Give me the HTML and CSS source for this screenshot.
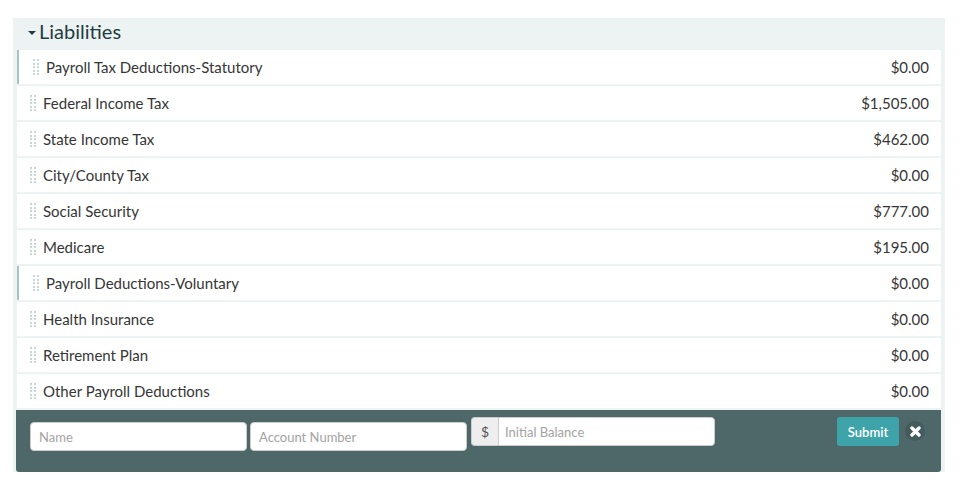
FILE: index.html
```html
<!DOCTYPE html>
<html>
<head>
<meta charset="utf-8">
<link rel="stylesheet" href="styles.css">
</head>
<body>
<div class="panel">
  <div class="panel-head"><span class="caret"></span><span class="title">Liabilities</span></div>
  <div class="rows">
    <div class="row group"><span class="grip"></span><span class="name">Payroll Tax Deductions-Statutory</span><span class="amt">$0.00</span></div>
    <div class="row"><span class="grip"></span><span class="name">Federal Income Tax</span><span class="amt">$1,505.00</span></div>
    <div class="row"><span class="grip"></span><span class="name">State Income Tax</span><span class="amt">$462.00</span></div>
    <div class="row"><span class="grip"></span><span class="name">City/County Tax</span><span class="amt">$0.00</span></div>
    <div class="row"><span class="grip"></span><span class="name">Social Security</span><span class="amt">$777.00</span></div>
    <div class="row"><span class="grip"></span><span class="name">Medicare</span><span class="amt">$195.00</span></div>
    <div class="row group"><span class="grip"></span><span class="name">Payroll Deductions-Voluntary</span><span class="amt">$0.00</span></div>
    <div class="row"><span class="grip"></span><span class="name">Health Insurance</span><span class="amt">$0.00</span></div>
    <div class="row"><span class="grip"></span><span class="name">Retirement Plan</span><span class="amt">$0.00</span></div>
    <div class="row"><span class="grip"></span><span class="name">Other Payroll Deductions</span><span class="amt">$0.00</span></div>
  </div>
  <form class="add-form">
    <input class="field name-field" type="text" placeholder="Name">
    <input class="field acct-field" type="text" placeholder="Account Number">
    <div class="money">
      <span class="addon">$</span>
      <input class="field bal-field" type="text" placeholder="Initial Balance">
    </div>
    <button class="submit" type="button">Submit</button>
    <span class="close">
      <svg width="11" height="11" viewBox="0 0 11 11"><path d="M2 2 L9 9 M9 2 L2 9" stroke="#fff" stroke-width="3.4" stroke-linecap="round"/></svg>
    </span>
  </form>
</div>
</body>
</html>
```

FILE: styles.css
```css
* { box-sizing: border-box; }
body {
  margin: 0;
  background: #fff;
  font-family: Lato, "Open Sans", sans-serif;
  color: #333;
}
.panel {
  margin: 18px 0 0 13px;
  width: 932px;
  height: 454px;
  background: #edf2f2;
}
.panel-head {
  height: 32px;
  display: flex;
  align-items: center;
  padding: 0 0 7px 15px;
}
.caret {
  width: 0;
  height: 0;
  border-left: 4px solid transparent;
  border-right: 4px solid transparent;
  border-top: 4.5px solid #1e3d42;
  margin-right: 3px;
  margin-top: 4px;
}
.title {
  font-size: 20px;
  color: #1e3d42;
  line-height: 1;
}
.rows {
  display: flex;
  flex-direction: column;
  gap: 2px;
  margin: 0 4px;
}
.row {
  height: 34px;
  background: #fff;
  display: flex;
  align-items: center;
  padding: 0 12px 0 13px;
  font-size: 15px;
  color: #363636;
}
.row.group {
  border-left: 2px solid #a6c4c6;
  padding-left: 14px;
}
.grip {
  width: 6px;
  height: 16px;
  margin-right: 7px;
  background-size: 2px 2px;
  background-repeat: no-repeat;
  background-image:
    linear-gradient(#c8d6d7,#c8d6d7), linear-gradient(#c8d6d7,#c8d6d7),
    linear-gradient(#c8d6d7,#c8d6d7), linear-gradient(#c8d6d7,#c8d6d7),
    linear-gradient(#c8d6d7,#c8d6d7), linear-gradient(#c8d6d7,#c8d6d7),
    linear-gradient(#c8d6d7,#c8d6d7), linear-gradient(#c8d6d7,#c8d6d7),
    linear-gradient(#c8d6d7,#c8d6d7), linear-gradient(#c8d6d7,#c8d6d7);
  background-position:
    0 0, 4px 0,
    0 3.5px, 4px 3.5px,
    0 7px, 4px 7px,
    0 10.5px, 4px 10.5px,
    0 14px, 4px 14px;
  flex: none;
}
.name { flex: 1; }
.amt { text-align: right; }
.add-form {
  margin: 2px 4px 0 3px;
  height: 62px;
  background: #4e6769;
  border-radius: 0 0 3px 3px;
  display: flex;
  align-items: flex-start;
  padding: 7px 0 0 14px;
}
.field {
  font-family: Lato, "Open Sans", sans-serif;
  font-size: 13px;
  border: 1px solid #ccc;
  border-radius: 4px;
  background: #fff;
  padding: 0 8px;
  outline: none;
  color: #333;
}
.field::placeholder { color: #a3a3a3; }
.name-field, .acct-field {
  width: 217px;
  height: 29px;
  margin-top: 5px;
}
.acct-field { margin-left: 3px; }
.money {
  display: flex;
  margin-left: 4px;
}
.addon {
  width: 27px;
  height: 29px;
  background: #eee;
  border: 1px solid #ccc;
  border-right: none;
  border-radius: 4px 0 0 4px;
  font-size: 14px;
  color: #555;
  display: flex;
  align-items: center;
  justify-content: center;
}
.bal-field {
  width: 217px;
  height: 29px;
  border-radius: 0 4px 4px 0;
  padding-left: 6px;
}
.submit {
  margin-left: 122px;
  width: 62px;
  height: 29px;
  background: #3fa4a9;
  border: none;
  border-radius: 3px;
  color: #fff;
  font-family: Lato, "Open Sans", sans-serif;
  font-size: 13px;
  font-weight: 600;
  padding: 0;
}
.close {
  margin-left: 6px;
  margin-top: 4px;
  width: 20px;
  height: 20px;
  border-radius: 50%;
  background: #445b5d;
  display: flex;
  align-items: center;
  justify-content: center;
}
```
